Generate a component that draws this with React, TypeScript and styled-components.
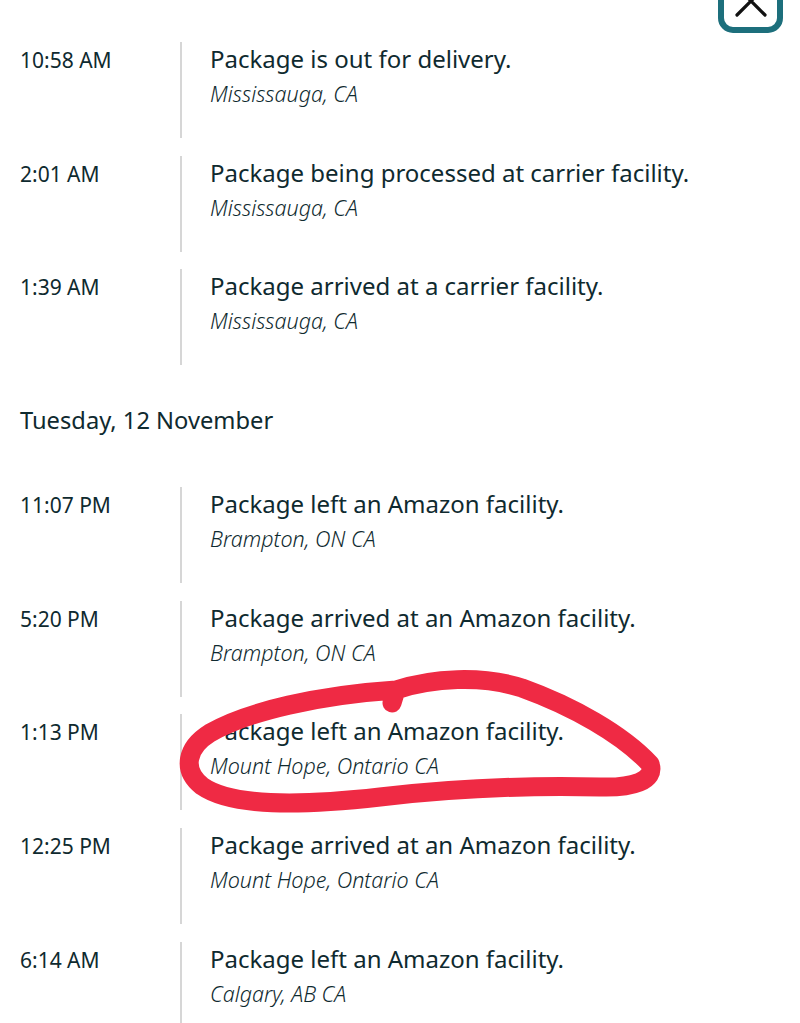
import { FC } from 'react';
import styled, { createGlobalStyle } from 'styled-components';

type Event = {
  time: string;
  title: string;
  place: string;
};

type Section = {
  date?: string;
  events: Event[];
};

const SECTIONS: Section[] = [
  {
    events: [
      { time: '10:58 AM', title: 'Package is out for delivery.', place: 'Mississauga, CA' },
      { time: '2:01 AM', title: 'Package being processed at carrier facility.', place: 'Mississauga, CA' },
      { time: '1:39 AM', title: 'Package arrived at a carrier facility.', place: 'Mississauga, CA' },
    ],
  },
  {
    date: 'Tuesday, 12 November',
    events: [
      { time: '11:07 PM', title: 'Package left an Amazon facility.', place: 'Brampton, ON CA' },
      { time: '5:20 PM', title: 'Package arrived at an Amazon facility.', place: 'Brampton, ON CA' },
      { time: '1:13 PM', title: 'Package left an Amazon facility.', place: 'Mount Hope, Ontario CA' },
      { time: '12:25 PM', title: 'Package arrived at an Amazon facility.', place: 'Mount Hope, Ontario CA' },
      { time: '6:14 AM', title: 'Package left an Amazon facility.', place: 'Calgary, AB CA' },
    ],
  },
];

export default function App() {
  return (
    <>
      <GlobalStyle />
      <Page>
        <Header>
          <CloseButton aria-label="Close">
            <svg width="34" height="34" viewBox="0 0 34 34">
              <path d="M3 3 L31 31 M31 3 L3 31" stroke="#111" strokeWidth="3.2" strokeLinecap="round" />
            </svg>
          </CloseButton>
        </Header>
        {SECTIONS.map((section, i) => (
          <div key={i}>
            {section.date && <DateHeading>{section.date}</DateHeading>}
            {section.events.map((ev) => (
              <TrackingRow key={ev.time} {...ev} />
            ))}
          </div>
        ))}
        <Scribble viewBox="0 0 800 1023" width="800" height="1023">
          <path
            d="M392 703 L396 690 C432 678 482 675 522 688 C572 706 622 734 650 764 C656 781 632 788 600 787 C520 785 440 790 380 797 C300 806 232 807 202 786 C182 770 186 748 210 733 C248 711 320 695 396 690"
            fill="none"
            stroke="#ef2a44"
            strokeWidth="19"
            strokeLinecap="round"
            strokeLinejoin="round"
          />
        </Scribble>
      </Page>
    </>
  );
}

const TrackingRow: FC<Event> = ({ time, title, place }) => (
  <Row>
    <Time>{time}</Time>
    <Details>
      <Title>{title}</Title>
      <Place>{place}</Place>
    </Details>
  </Row>
);

const GlobalStyle = createGlobalStyle`
  html, body {
    margin: 0;
    padding: 0;
    background: #ffffff;
  }
  body {
    font-family: "Noto Sans", "Open Sans", sans-serif;
    color: #0f2a2f;
  }
`;

const Page = styled.div`
  position: relative;
  width: 800px;
  height: 1023px;
  overflow: hidden;
`;

const Header = styled.div`
  display: flex;
  justify-content: flex-end;
  height: 42px;
  padding-right: 17px;
`;

const CloseButton = styled.div`
  box-sizing: border-box;
  width: 65px;
  height: 65px;
  margin-top: -32px;
  border: 6px solid #1d6f7c;
  border-radius: 15px;
  display: flex;
  align-items: center;
  justify-content: center;
  background: #fff;
`;

const Row = styled.div`
  display: grid;
  grid-template-columns: 182px 1fr;
  height: 96px;
  margin-bottom: 17.7px;
`;

const Time = styled.div`
  box-sizing: border-box;
  padding: 5px 0 0 20px;
  font-size: 21px;
  line-height: 26px;
  border-right: 2px solid #d6d6d6;
`;

const Details = styled.div`
  padding: 3px 0 0 28px;
  display: flex;
  flex-direction: column;
  gap: 8px;
`;

const Title = styled.div`
  font-size: 24px;
  line-height: 28px;
`;

const Place = styled.div`
  font-size: 21.5px;
  line-height: 26px;
  font-style: italic;
  font-weight: 350;
`;

const DateHeading = styled.div`
  padding: 21px 0 51px 20px;
  font-size: 23.7px;
  line-height: 32px;
`;

const Scribble = styled.svg`
  position: absolute;
  top: 0;
  left: 0;
  pointer-events: none;
`;
